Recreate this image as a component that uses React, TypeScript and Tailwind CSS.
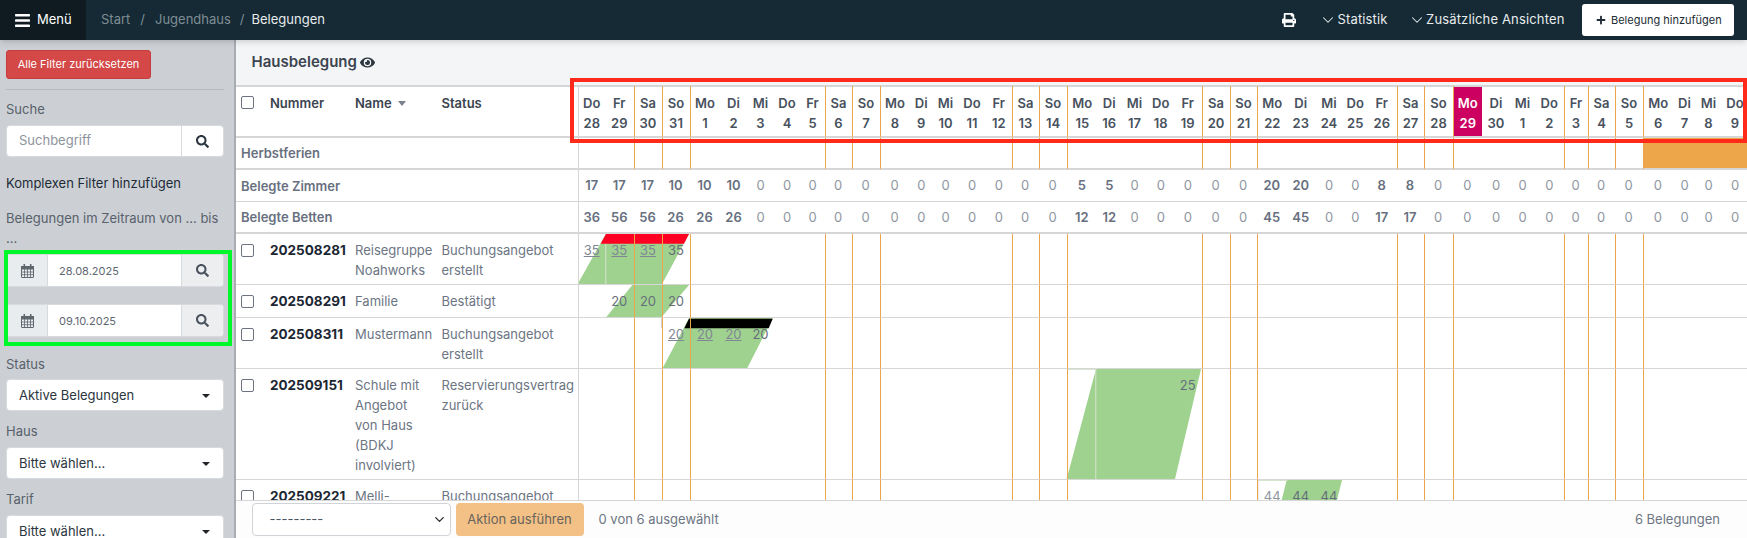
import React from "react";
import { FaBars, FaPrint, FaSearch, FaEye, FaPlus } from "react-icons/fa";
import { ChevronDown } from "lucide-react";

const edges = [577.5,605,633.5,661.5,689.5,719.5,747.5,773.5,800.5,824.5,851.5,879.5,909.5,933,958,986,1011.5,1038.5,1066.5,1097,1121.5,1147.5,1174,1201.5,1229.5,1256.5,1287,1314.5,1343.5,1367,1396.5,1423.5,1452.5,1482,1510,1535,1563.5,1587.5,1614.5,1642.5,1673,1696,1721,1749];
const wd = ["Do","Fr","Sa","So","Mo","Di","Mi"];
const nums = [28,29,30,31,1,2,3,4,5,6,7,8,9,10,11,12,13,14,15,16,17,18,19,20,21,22,23,24,25,26,27,28,29,30,1,2,3,4,5,6,7,8,9];
const days = nums.map((n, i) => {
  const w = wd[i % 7];
  return { n, w, width: edges[i + 1] - edges[i], line: w === "Sa" || w === "So" || w === "Mo" || i === 36, today: i === 32, holiday: i >= 39 };
});
const z = (k: number) => Array(k).fill(0);
const zimmer = [17,17,17,10,10,10,...z(12),5,5,...z(5),20,20,0,0,8,8,0,...z(11)];
const betten = [36,56,56,26,26,26,...z(12),12,12,...z(5),45,45,0,0,17,17,0,...z(11)];

type Row = { id: string; name: string; status: string; h: string; cells: Record<number, { t: string; u?: boolean; light?: boolean }> };
const rows: Row[] = [
  { id: "202508281", name: "Reisegruppe Noahworks", status: "Buchungsangebot erstellt", h: "h-[51px]", cells: { 0: { t: "35", u: true }, 1: { t: "35", u: true }, 2: { t: "35", u: true }, 3: { t: "35" } } },
  { id: "202508291", name: "Familie", status: "Bestätigt", h: "h-[33px]", cells: { 1: { t: "20" }, 2: { t: "20" }, 3: { t: "20" } } },
  { id: "202508311", name: "Mustermann", status: "Buchungsangebot erstellt", h: "h-[51px]", cells: { 3: { t: "20", u: true }, 4: { t: "20", u: true }, 5: { t: "20", u: true }, 6: { t: "20" } } },
  { id: "202509151", name: "Schule mit Angebot von Haus (BDKJ involviert)", status: "Reservierungsvertrag zurück", h: "h-[111px]", cells: { 22: { t: "25" } } },
  { id: "202509221", name: "Melli-", status: "Buchungsangebot", h: "h-[111px]", cells: { 25: { t: "44", light: true }, 26: { t: "44" }, 27: { t: "44" } } },
];

function Caret() {
  return <span className="w-0 h-0 border-x-[4px] border-x-transparent border-t-[4px] border-t-[#212529]" />;
}

function CalendarIcon() {
  return (
    <svg width="13" height="14" viewBox="0 0 13 14" fill="none" stroke="#5f666d" strokeWidth="1">
      <rect x="0.5" y="2.5" width="12" height="11" rx="0.5" />
      <rect x="0.5" y="2.5" width="12" height="2.5" fill="#5f666d" />
      <path d="M0.5 8H12.5M0.5 10.7H12.5M3.5 5V13.5M6.5 5V13.5M9.5 5V13.5" strokeWidth="0.8" />
      <path d="M3.3 0.5V3.5M9.7 0.5V3.5" strokeWidth="1.6" strokeLinecap="round" />
    </svg>
  );
}

function Select({ label }: { label: string }) {
  return (
    <div className="mt-[6px] h-[32px] w-[218px] bg-white rounded-[4px] border border-[#d8dbde] flex items-center justify-between pl-[12px] pr-[13px] pt-[1px] text-[13px] text-[#2c3640]">
      <span>{label}</span>
      <Caret />
    </div>
  );
}

function DateInput({ value, cls }: { value: string; cls: string }) {
  return (
    <div className={`${cls} h-[33px] w-[218px] flex rounded-[4px] overflow-hidden border border-[#d8dbde] bg-white text-[11px] text-[#5f6771]`}>
      <div className="w-[41px] bg-[#e9ecef] flex items-center justify-center border-r border-[#d8dbde]"><CalendarIcon /></div>
      <div className="flex-1 flex items-center pl-[11px] pt-[1px]">{value}</div>
      <div className="w-[42px] bg-[#eceef0] flex items-center justify-center border-l border-[#d8dbde]"><FaSearch className="w-[13px] h-[13px] text-[#4a535d]" /></div>
    </div>
  );
}

function Sidebar() {
  return (
    <aside className="w-[236px] shrink-0 bg-[#ccd0d5] border-r-2 border-[#a9adb3] pl-[6px] overflow-hidden text-[13px] text-[#58616b]">
      <button className="mt-[10px] h-[29px] w-[145px] bg-[#d44848] border border-[#c63b3b] rounded-[3px] text-white text-[11px]">Alle Filter zurücksetzen</button>
      <div className="mt-[10px] h-px w-[218px] bg-[#b5b9be]" />
      <div className="mt-[9px] leading-[20px]">Suche</div>
      <div className="mt-[6px] h-[32px] w-[218px] flex bg-white rounded-[4px] border border-[#d8dbde]">
        <div className="flex-1 flex items-center pl-[12px] text-[#8d949c]">Suchbegriff</div>
        <div className="w-[42px] border-l border-[#d8dbde] flex items-center justify-center"><FaSearch className="w-[13px] h-[13px] text-[#2c3640]" /></div>
      </div>
      <div className="mt-[16px] leading-[20px] text-[#1d2b36]">Komplexen Filter hinzufügen</div>
      <div className="mt-[15px] leading-[20px] w-[218px]">Belegungen im Zeitraum von ... bis ...</div>
      <DateInput value="28.08.2025" cls="mt-[6px]" />
      <DateInput value="09.10.2025" cls="mt-[17px]" />
      <div className="mt-[17px] leading-[20px]">Status</div>
      <div className="-mt-[1px]"><Select label="Aktive Belegungen" /></div>
      <div className="mt-[10px] leading-[20px]">Haus</div>
      <Select label="Bitte wählen..." />
      <div className="mt-[10px] leading-[20px]">Tarif</div>
      <Select label="Bitte wählen..." />
    </aside>
  );
}

function Bars() {
  return (
    <svg className="absolute left-0 top-0" width="1511" height="415" viewBox="236 85 1511 415">
      <polygon points="605.7,234 689,234 662,284 577.7,284" fill="#a0d28f" />
      <polygon points="606,234 689,234 684,243.7 600.7,243.7" fill="#ff0022" />
      <rect x="605.3" y="244" width="1" height="40" fill="#d5e6cc" />
      <rect x="606" y="284" width="56" height="1" fill="#d5e6cc" />
      <polygon points="632.3,285 689,285 661.7,317 606.3,317" fill="#a0d28f" />
      <polygon points="689,318 772.7,318 747.3,368 662.7,368" fill="#a0d28f" />
      <polygon points="689,318.7 772.7,318.7 768.7,328.3 684.3,328.3" fill="#000000" />
      <rect x="661.5" y="318" width="1" height="10" fill="#a8a8a8" />
      <polygon points="1096,369 1201,369 1175,479 1066.7,479" fill="#a0d28f" />
      <rect x="1095.3" y="370" width="1" height="109" fill="#d5e6cc" />
      <rect x="1066.7" y="369" width="30" height="1" fill="#d5e6cc" />
      <polygon points="1286.7,480 1342,480 1337,500 1281.7,500" fill="#a0d28f" />
      <rect x="1257.5" y="480" width="30" height="1" fill="#d5e6cc" />
      <rect x="1257.5" y="480" width="1" height="20" fill="#dcdcdc" />
    </svg>
  );
}

function Table() {
  const hb = "border-b-2 border-[#d6d6d6]";
  const sb = "border-b border-[#d6d6d6]";
  return (
    <div className="relative flex-1 overflow-hidden bg-white">
      <Bars />
      <table className="relative table-fixed w-[1513px] border-separate border-spacing-0 text-[13px]">
        <colgroup>
          <col className="w-[30px]" />
          <col className="w-[85px]" />
          <col className="w-[86.5px]" />
          <col className="w-[140px]" />
          {days.map((d, i) => <col key={i} style={{ width: d.width }} />)}
        </colgroup>
        <thead>
          <tr>
            <th className={`h-[53px] border-t-2 ${hb} border-t-[#d6d6d6] align-top pl-[5px] pt-[9px] text-left`}><input type="checkbox" className="block appearance-none w-[13px] h-[13px] bg-white border border-[#6b7280] rounded-[2px]" /></th>
            <th className={`border-t-2 ${hb} border-t-[#d6d6d6] align-top pl-[4px] pt-[6px] text-left font-semibold leading-[20px] text-[#3b4450]`}>Nummer</th>
            <th className={`border-t-2 ${hb} border-t-[#d6d6d6] align-top pl-[4px] pt-[6px] text-left font-semibold leading-[20px] text-[#3b4450]`}><span className="inline-flex items-center gap-[6px]">Name<span className="w-0 h-0 border-x-[4px] border-x-transparent border-t-[5px] border-t-[#7a8290]" /></span></th>
            <th className={`border-t-2 ${hb} border-t-[#d6d6d6] align-top pl-[4px] pt-[6px] text-left font-semibold leading-[20px] text-[#3b4450]`}>Status</th>
            {days.map((d, i) => (
              <th key={i} className={`border-t-2 ${hb} border-t-[#d6d6d6] align-top pt-[6px] p-0 font-semibold leading-[20px] text-center ${d.today ? "bg-[#cb0060] text-white" : "text-[#48515d]"} ${d.line ? "border-l border-l-[#eea64b]" : i === 0 ? "border-l border-l-[#d6d6d6]" : ""}`}>
                <div className="whitespace-nowrap">{d.w}</div>
                <div>{d.n}</div>
              </th>
            ))}
          </tr>
        </thead>
        <tbody>
          <tr>
            <td colSpan={4} className={`h-[32px] ${hb} pl-[5px] pt-[2px] font-semibold text-[#687080]`}>Herbstferien</td>
            {days.map((d, i) => <td key={i} className={`${hb} ${d.holiday ? "bg-[#eea64b]" : ""} ${d.line ? "border-l border-l-[#eea64b]" : i === 0 ? "border-l border-l-[#d6d6d6]" : ""}`} />)}
          </tr>
          {[{ l: "Belegte Zimmer", v: zimmer, b: sb }, { l: "Belegte Betten", v: betten, b: hb }].map((s) => (
            <tr key={s.l}>
              <td colSpan={4} className={`h-[32px] ${s.b} pl-[5px] pt-[2px] font-semibold text-[#687080]`}>{s.l}</td>
              {s.v.map((v, i) => <td key={i} className={`${s.b} pt-[1px] text-center ${v ? "font-semibold text-[#687080]" : "text-[#8f96a1]"} ${i === 0 ? "border-l border-l-[#d6d6d6]" : ""}`}>{v}</td>)}
            </tr>
          ))}
          {rows.map((r) => (
            <tr key={r.id}>
              <td className={`${r.h} ${sb} align-top pl-[5px] pt-[10px]`}><input type="checkbox" className="block appearance-none w-[13px] h-[13px] bg-white border border-[#6b7280] rounded-[2px]" /></td>
              <td className={`${sb} align-top pl-[4px] pt-[6px] font-bold leading-[20px] text-[#1c2733] text-[13.5px]`}>{r.id}</td>
              <td className={`${sb} align-top pl-[4px] pr-[5px] pt-[6px] leading-[20px] text-[#6c7583]`}>{r.name}</td>
              <td className={`${sb} align-top pl-[4px] pt-[6px] leading-[20px] text-[#6c7583]`}>{r.status}</td>
              {days.map((d, i) => {
                const c = r.cells[i];
                return (
                  <td key={i} className={`${sb} align-top pt-[6px] leading-[20px] text-center ${d.line ? "border-l border-l-[#eea64b]" : i === 0 ? "border-l border-l-[#d6d6d6]" : ""} ${c?.u ? "underline text-[#7f8694]" : c?.light ? "text-[#8f96a1]" : "text-[#666e7b]"}`}>
                    {c ? c.t : ""}
                  </td>
                );
              })}
            </tr>
          ))}
        </tbody>
      </table>
    </div>
  );
}

export default function App() {
  return (
    <div className="relative w-[1747px] h-[538px] overflow-hidden flex flex-col bg-white font-[Inter,sans-serif] text-[13px]">
      <header className="relative z-10 h-[40px] shrink-0 bg-[#152a34] flex items-center shadow-md text-[#e8ecee]">
        <div className="w-[86px] h-full bg-[#0f1b20] flex items-center pl-[14px] gap-[6px] text-white">
          <FaBars className="w-[17px] h-[17px]" />
          <span>Menü</span>
        </div>
        <nav className="ml-[15px] flex items-center text-[#7f8d95]">
          <span>Start</span>
          <span className="ml-[10px]">/</span>
          <span className="ml-[10px]">Jugendhaus</span>
          <span className="ml-[9px]">/</span>
          <span className="ml-[7px] text-[#e8ecee]">Belegungen</span>
        </nav>
        <div className="ml-auto flex items-center pr-[13px] tracking-[0.15px]">
          <FaPrint className="w-[14px] h-[14px] text-white" />
          <ChevronDown className="ml-[23px] w-[18px] h-[18px]" strokeWidth={1.4} />
          <span>Statistik</span>
          <ChevronDown className="ml-[20.5px] w-[18px] h-[18px]" strokeWidth={1.4} />
          <span>Zusätzliche Ansichten</span>
          <button className="ml-[17.5px] w-[152px] h-[32px] bg-white rounded-[3px] flex items-center pl-[14px] gap-[5px] text-[11px] tracking-normal text-[#222c36]">
            <FaPlus className="w-[10px] h-[10px]" />
            <span>Belegung hinzufügen</span>
          </button>
        </div>
      </header>
      <div className="flex-1 flex min-h-0">
        <Sidebar />
        <main className="flex-1 min-w-0 flex flex-col">
          <div className="h-[45px] shrink-0 bg-[#f4f5f7] flex items-center pl-[15.5px] gap-[3px] text-[15px] font-semibold text-[#3b4450]">
            <span>Hausbelegung</span>
            <FaEye className="w-[15px] h-[15px] text-[#2c3640]" />
          </div>
          <Table />
          <footer className="h-[38px] shrink-0 bg-[#fdfdfd] border-t border-[#d6d6d6] flex items-center pl-[15.5px] pr-[27px] text-[13px] text-[#6c7583]">
            <div className="relative w-[199px] h-[33px] bg-white border border-[#d0d4d8] rounded-[4px] flex items-center pl-[17px] text-[#4b5563]">
              <span>---------</span>
              <ChevronDown className="absolute right-[3px] top-[8px] w-[15px] h-[15px] text-[#333]" strokeWidth={2.25} />
            </div>
            <button className="ml-[5px] w-[128px] h-[33px] bg-[#f3c086] rounded-[4px] text-[#68645c]">Aktion ausführen</button>
            <span className="ml-[15px]">0 von 6 ausgewählt</span>
            <span className="ml-auto">6 Belegungen</span>
          </footer>
        </main>
      </div>
      <div className="absolute z-20 left-[570px] top-[78px] w-[1177px] h-[65px] border-4 border-[#ff2a1a]" />
      <div className="absolute z-20 left-[4px] top-[250px] w-[228px] h-[96px] border-4 border-[#00f82a]" />
    </div>
  );
}
